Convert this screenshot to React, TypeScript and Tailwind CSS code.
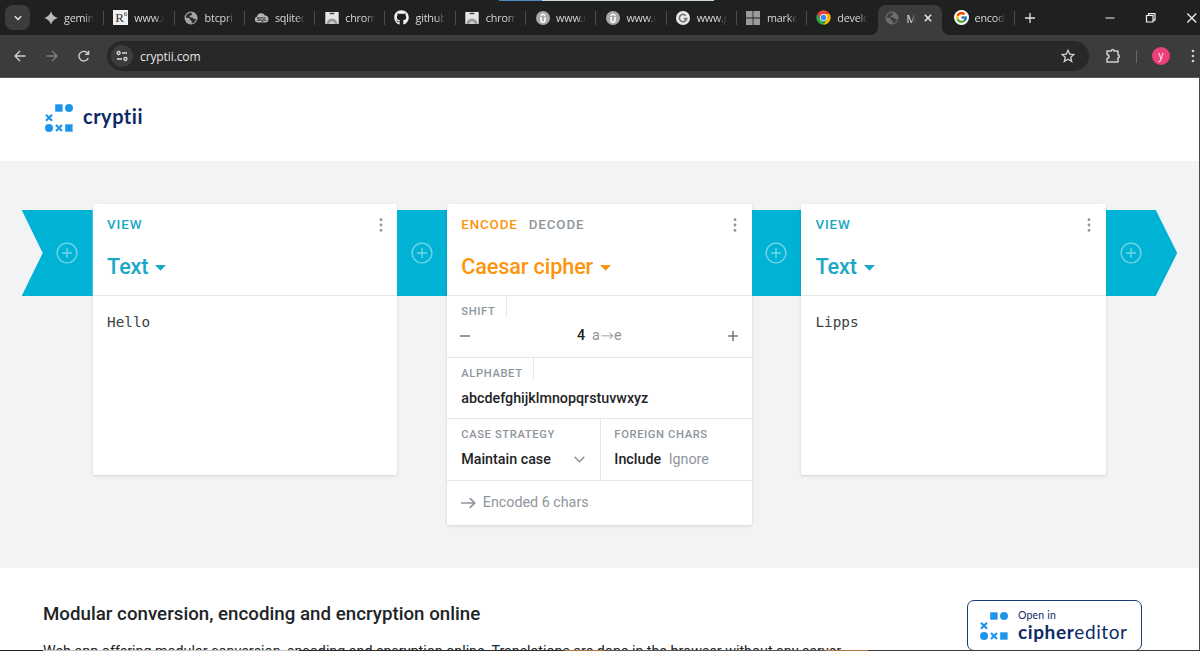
import type { ReactNode } from 'react';
import clsx from 'clsx';
import { FaGithub } from 'react-icons/fa';
import { FcGoogle } from 'react-icons/fc';

function GlobeIcon({ className = 'text-[#a5a5a5]', land = '#2c2e2d' }: { className?: string; land?: string }) {
  return (
    <svg viewBox="0 0 14 14" className={clsx('h-[14px] w-[14px]', className)}>
      <circle cx="7" cy="7" r="6.5" fill="currentColor" />
      <path d="M1.6 6.4 3 3.2 6.6 1.4l1.6 1-.8 1.8-1.8.6.2 1.4 2.6.2 1.2 1.4 2.4.2-.6 2.2-2.4 2-1.4-.2.2-2-1.8-1-.4-1.8z" fill={land} />
    </svg>
  );
}

function GeminiIcon() {
  return (
    <svg viewBox="0 0 14 14" className="h-[14px] w-[14px]">
      <path d="M7 .2C8 3.800 10.200 6 13.800 7 10.200 8 8 10.200 7 13.800 6 10.200 3.800 8 .2 7 3.800 6 6 3.800 7 .2z" fill="#b9b9b9" />
    </svg>
  );
}

function ResearchIcon() {
  return (
    <span className="relative block h-[15px] w-[15px] bg-[#f1f1f1] pl-[2px] font-['Liberation_Serif',serif] text-[13px] leading-[16px] text-[#333]">
      R
      <sup className="absolute right-[1px] top-[1px] text-[7px] leading-[7px]">6</sup>
    </span>
  );
}

function SqlIcon() {
  return (
    <svg viewBox="0 0 15 14" className="h-[14px] w-[15px]">
      <path d="M3.500 11.500a3 3 0 0 1-.4-5.900A4.200 4.200 0 0 1 11 4.600a3.500 3.500 0 0 1 .8 6.900z" fill="#b4b4b4" />
      <text x="2.700" y="9.900" fontSize="5" fontWeight="700" fill="#2a2a2a" fontFamily="Liberation Sans, sans-serif">SQL</text>
    </svg>
  );
}

function WebStoreIcon() {
  return (
    <svg viewBox="0 0 14 14" className="h-[14px] w-[14px]">
      <rect x=".3" y="1" width="13.400" height="12" fill="#e6e6e6" />
      <rect x="4.500" y="1.800" width="5" height="1.500" rx=".7" fill="#444" />
      <path d="M1.500 13a5.500 5.500 0 0 1 11 0z" fill="#9a9a9a" />
      <path d="M4.300 13a2.700 2.700 0 0 1 5.400 0z" fill="#cdcdcd" />
    </svg>
  );
}

function UdemyIcon() {
  return (
    <svg viewBox="0 0 14 14" className="h-[14px] w-[14px]">
      <circle cx="7" cy="7" r="7" fill="#a9a9a9" />
      <path d="M5 6v3.200a2 2 0 0 0 4 0V6M4.600 4.600 7 3.200l2.400 1.400" fill="none" stroke="#fff" strokeWidth="1.500" />
    </svg>
  );
}

function GrammarlyIcon() {
  return (
    <svg viewBox="0 0 14 14" className="h-[14px] w-[14px]">
      <circle cx="7" cy="7" r="7" fill="#ececec" />
      <path d="M9.800 4.600A3.700 3.700 0 1 0 10.700 7.600H7.600" fill="none" stroke="#777" strokeWidth="1.700" />
    </svg>
  );
}

function SquaresIcon() {
  return (
    <svg viewBox="0 0 14 14" className="h-[14px] w-[14px]" fill="#9b9b9b">
      <path d="M0 0h6.600v6.600H0zM7.400 0H14v6.600H7.400zM0 7.400h6.600V14H0zM7.400 7.400H14V14H7.400z" />
    </svg>
  );
}

function ChromeIcon() {
  return (
    <svg viewBox="0 0 48 48" className="h-[15px] w-[15px]">
      <path d="M24 12.500h19.900A23 23 0 0 0 4.100 12.500l10 17.300z" fill="#ea4335" />
      <path d="M33.900 29.800 24 47a23 23 0 0 0 19.900-34.500H24z" fill="#fbbc04" />
      <path d="M14 29.800 4.100 12.500A23 23 0 0 0 24 47l9.900-17.200z" fill="#34a853" />
      <circle cx="24" cy="24" r="11.500" fill="#fff" />
      <circle cx="24" cy="24" r="9" fill="#4285f4" />
    </svg>
  );
}

function GoogleIcon() {
  return (
    <span className="flex h-[15px] w-[15px] items-center justify-center rounded-full bg-white">
      <FcGoogle size={13} />
    </span>
  );
}

const TABS: { title: string; icon: ReactNode }[] = [
  { title: 'gemin', icon: <GeminiIcon /> },
  { title: 'www.r', icon: <ResearchIcon /> },
  { title: 'btcpri', icon: <GlobeIcon /> },
  { title: 'sqlitec', icon: <SqlIcon /> },
  { title: 'chrom', icon: <WebStoreIcon /> },
  { title: 'github', icon: <FaGithub size={15} color="#f4f4f4" /> },
  { title: 'chrom', icon: <WebStoreIcon /> },
  { title: 'www.u', icon: <UdemyIcon /> },
  { title: 'www.u', icon: <UdemyIcon /> },
  { title: 'www.g', icon: <GrammarlyIcon /> },
  { title: 'marke', icon: <SquaresIcon /> },
  { title: 'develo', icon: <ChromeIcon /> },
];

function Tab({ title, icon, last }: { title: string; icon: ReactNode; last?: boolean }) {
  return (
    <div className="flex h-full w-[70.3px] shrink-0 items-center pl-[9px]">
      <span className="flex w-[15px] shrink-0 justify-center">{icon}</span>
      <span className="ml-[6px] mt-px w-[30px] whitespace-nowrap text-[10.800px] leading-4 tracking-[-0.2px] text-[#d8d8d8] [mask-image:linear-gradient(to_right,black_70%,transparent)]">
        {title}
      </span>
      <span className={clsx('ml-auto h-[14px] w-px', last ? 'bg-transparent' : 'bg-[#4a4b4b]')} />
    </div>
  );
}

function TabStrip() {
  return (
    <div className="flex h-[35px] items-center bg-[#1f2120] font-['Open_Sans','Noto_Sans',sans-serif]">
      <button className="ml-[5px] flex h-[25px] w-[25px] shrink-0 items-center justify-center rounded-[8px] bg-[#3c3c3c]">
        <svg viewBox="0 0 10 10" className="h-[10px] w-[10px]" fill="none" stroke="#e8e8e8" strokeWidth="1.500">
          <path d="M1.800 3.300 5 6.500l3.200-3.200" />
        </svg>
      </button>
      <div className="ml-[4px] flex h-full">
        {TABS.map((tab, i) => (
          <Tab key={i} title={tab.title} icon={tab.icon} last={i === TABS.length - 1} />
        ))}
      </div>
      <div className="relative mt-[5px] flex h-[30px] w-[64px] shrink-0 items-center rounded-t-[8px] bg-[#3c3c3c] pb-[4px] pl-[7px]">
        <span className="absolute -left-[8px] bottom-0 h-[8px] w-[8px] bg-[radial-gradient(circle_at_0_0,transparent_8px,#3c3c3c_8px)]" />
        <span className="absolute -right-[8px] bottom-0 h-[8px] w-[8px] bg-[radial-gradient(circle_at_100%_0,transparent_8px,#3c3c3c_8px)]" />
        <GlobeIcon className="text-[#6e6e6e]" land="#3c3c3c" />
        <span className="ml-[8px] mt-px w-[8px] text-[10.800px] leading-4 text-[#e6e6e6] [mask-image:linear-gradient(to_right,black_50%,transparent)]">
          M
        </span>
        <svg viewBox="0 0 8 8" className="ml-[9px] h-[8px] w-[8px]" stroke="#ededed" strokeWidth="1.400">
          <path d="M.8.8l6.400 6.400M7.200.8.8 7.200" />
        </svg>
      </div>
      <div className="ml-[3px] flex h-full">
        <Tab title="encod" icon={<GoogleIcon />} />
      </div>
      <svg viewBox="0 0 10 10" className="ml-[10px] h-[10px] w-[10px] shrink-0" stroke="#e2e2e2" strokeWidth="1.300">
        <path d="M5 0v10M0 5h10" />
      </svg>
      <svg viewBox="0 0 94 12" className="ml-[70px] h-[12px] w-[94px] shrink-0" fill="none" stroke="#f0f0f0" strokeWidth="1.200">
        <path d="M.5 6h9M82.300 1.500l9 9M91.300 1.500l-9 9" />
        <path d="M41.500 3.500h6.500V10h-6.500zM43.500 3.500V1.700h6.500v6.500h-2" />
      </svg>
    </div>
  );
}

function Toolbar() {
  return (
    <div className="flex h-[43px] items-center border-b border-[#5a5a5a] bg-[#3c3c3c] font-['Open_Sans','Noto_Sans',sans-serif]">
      <svg viewBox="0 0 76 12" className="ml-[14px] h-[12px] w-[76px] shrink-0" fill="none" strokeWidth="1.400">
        <path d="M6 1 1 6l5 5M1 6h10.500" stroke="#d0d0d0" />
        <path d="M38 1l5 5-5 5M43 6H32.500" stroke="#7c7c7c" />
        <path d="M74.200 8A4.800 4.800 0 1 1 73 2.600l1.500 1.600M74.600.8v3.600H71" stroke="#d0d0d0" />
      </svg>
      <div className="ml-[17px] flex h-[30px] w-[982px] shrink-0 items-center rounded-full bg-[#282828] pl-[4px] pr-[13px]">
        <span className="flex h-[22px] w-[22px] items-center justify-center rounded-full bg-[#3c3c3c]">
          <svg viewBox="0 0 12 12" className="h-[12px] w-[12px]" fill="none" stroke="#dcdcdc" strokeWidth="1.300">
            <circle cx="2.600" cy="3" r="1.500" />
            <circle cx="9.400" cy="9" r="1.500" />
            <path d="M6 3h5M1 9h5" />
          </svg>
        </span>
        <span className="ml-[7px] mt-px text-[12px] leading-4 tracking-[-0.1px] text-[#e6e6e6]">cryptii.com</span>
        <svg viewBox="0 0 24 24" className="ml-auto h-[16px] w-[16px]" fill="none" stroke="#d0d0d0" strokeWidth="2">
          <path d="M12 3.500l2.600 5.700 6.200.6-4.700 4.100 1.400 6.100-5.500-3.200L6.500 20l1.400-6.100L3.200 9.800l6.200-.6z" />
        </svg>
      </div>
      <svg viewBox="0 0 16 16" className="ml-[16px] h-[16px] w-[16px] shrink-0" fill="none" stroke="#d0d0d0" strokeWidth="1.500">
        <path d="M2 3h4.200c0-1.900 2.800-1.900 2.800 0h4v4c1.900 0 1.900 2.800 0 2.800V14H2v-3.400c2.600-.2 2.600-4 0-4.200z" strokeLinejoin="round" />
      </svg>
      <span className="ml-[15px] h-[13px] w-px bg-[#666]" />
      <span className="ml-[15px] flex h-[18px] w-[18px] shrink-0 items-center justify-center rounded-full bg-[#ec407a] pb-px text-[10px] text-white">
        y
      </span>
      <svg viewBox="0 0 4 14" className="ml-[21px] h-[14px] w-[4px] shrink-0" fill="#d0d0d0">
        <circle cx="2" cy="2" r="1.300" />
        <circle cx="2" cy="7" r="1.300" />
        <circle cx="2" cy="12" r="1.300" />
      </svg>
    </div>
  );
}

function LogoMark({ className }: { className: string }) {
  return (
    <svg viewBox="0 0 28 28" className={className} fill="#1e95ea">
      <rect x="10.200" y=".3" width="7.400" height="7.400" />
      <circle cx="24" cy="4" r="4" />
      <circle cx="4" cy="24" r="4" />
      <rect x="20.200" y="20.300" width="7.400" height="7.400" />
      <path d="M1 10.700l6 6M7 10.700l-6 6M11 21l6 6M17 21l-6 6" stroke="#1e95ea" strokeWidth="2.200" />
    </svg>
  );
}

function Connector({ shape }: { shape?: 'start' | 'end' }) {
  return (
    <div
      className={clsx(
        'mt-[6px] flex h-[86px] shrink-0 items-center bg-[#00b2d4]',
        shape === 'start' && 'w-[71px] justify-end pr-[14.500px] [clip-path:polygon(0_0,100%_0,100%_100%,0_100%,21px_50%)]',
        shape === 'end' && 'w-[71.500px] pl-[14px] [clip-path:polygon(0_0,50px_0,100%_50%,50px_100%,0_100%)]',
        !shape && 'w-[49.500px] justify-center',
      )}
    >
      <svg viewBox="0 0 22 22" className="h-[22px] w-[22px]" fill="none" stroke="#73d5e8" strokeWidth="1.400">
        <circle cx="11" cy="11" r="9.900" />
        <path d="M11 6v10M6 11h10" />
      </svg>
    </div>
  );
}

function BrickHeader({ children, title, color }: { children: ReactNode; title: string; color: string }) {
  return (
    <div className="h-[92px] border-b border-[#e3e6e9] px-[14.400px] pt-[12px]">
      <div className="flex h-[18px] items-center gap-[11px] text-[13.400px] font-medium leading-[18px] tracking-[0.85px]">
        {children}
        <svg viewBox="0 0 4 14" className="ml-auto h-[14px] w-[4px]" fill="#8b9299">
          <circle cx="2" cy="1.700" r="1.400" />
          <circle cx="2" cy="7" r="1.400" />
          <circle cx="2" cy="12.300" r="1.400" />
        </svg>
      </div>
      <div className={clsx('mt-[19px] flex items-center text-[21.600px] font-medium leading-[28px] tracking-[-0.1px]', color)}>
        {title}
        <svg viewBox="0 0 11 6" className="ml-[7px] mt-px h-[6px] w-[11px]" fill="currentColor">
          <path d="M0 0h11L5.500 5.700z" />
        </svg>
      </div>
    </div>
  );
}

function ViewBrick({ content }: { content: string }) {
  return (
    <div className="h-[271px] w-[304.700px] shrink-0 rounded-[2px] bg-white shadow-[0_1px_3px_rgba(0,0,0,0.14)]">
      <BrickHeader title="Text" color="text-[#1ba7c6]">
        <span className="text-[#1ba7c6]">VIEW</span>
      </BrickHeader>
      <p className="px-[14.400px] pt-[16px] font-['DejaVu_Sans_Mono','Liberation_Mono',monospace] text-[14.300px] leading-[20px] text-[#3b3f42]">
        {content}
      </p>
    </div>
  );
}

function FieldLabel({ children, divider }: { children: string; divider?: boolean }) {
  return (
    <div
      className={clsx(
        'flex h-[21px] w-fit items-end text-[11.200px] font-medium leading-[11px] tracking-[0.62px] text-[#8e969d]',
        divider && 'border-r border-[#e3e6e9] pr-[10.500px]',
      )}
    >
      {children}
    </div>
  );
}

function CipherBrick() {
  return (
    <div className="h-[321px] w-[304.700px] shrink-0 rounded-[2px] bg-white text-[14.300px] font-medium text-[#1f2326] shadow-[0_1px_3px_rgba(0,0,0,0.14)]">
      <BrickHeader title="Caesar cipher" color="text-[#fb950d]">
        <span className="text-[#fb950d]">ENCODE</span>
        <span className="text-[#8e969d]">DECODE</span>
      </BrickHeader>
      <div className="h-[61.500px] border-b border-[#e3e6e9] px-[14.400px]">
        <FieldLabel divider>SHIFT</FieldLabel>
        <div className="mt-[9px] flex h-[20px] items-center justify-between">
          <svg viewBox="0 0 10 10" className="-ml-px h-[10px] w-[10px]" stroke="#6f777e" strokeWidth="1.500">
            <path d="M0 5h10" />
          </svg>
          <span className="flex items-center">
            4
            <span className="ml-[7px] flex items-center font-normal text-[#8e969d]">
              a
              <span className="w-[14px] text-center font-['DejaVu_Sans',sans-serif] text-[16px] leading-[16px] [font-weight:200]">→</span>
              e
            </span>
          </span>
          <svg viewBox="0 0 10 10" className="-mr-px h-[10px] w-[10px]" stroke="#6f777e" strokeWidth="1.500">
            <path d="M0 5h10M5 0v10" />
          </svg>
        </div>
      </div>
      <div className="h-[61.500px] border-b border-[#e3e6e9] px-[14.400px]">
        <FieldLabel divider>ALPHABET</FieldLabel>
        <p className="mt-[9px] leading-[20px]">abcdefghijklmnopqrstuvwxyz</p>
      </div>
      <div className="flex h-[61.500px] border-b border-[#e3e6e9]">
        <div className="w-[153.700px] border-r border-[#e3e6e9] px-[14.400px]">
          <FieldLabel>CASE STRATEGY</FieldLabel>
          <div className="mt-[9px] flex items-center justify-between leading-[20px]">
            Maintain case
            <svg viewBox="0 0 11 7" className="mt-px h-[7px] w-[11px]" fill="none" stroke="#8e969d" strokeWidth="1.500">
              <path d="M.7.9l4.800 4.800L10.300.9" />
            </svg>
          </div>
        </div>
        <div className="pl-[13.800px]">
          <FieldLabel>FOREIGN CHARS</FieldLabel>
          <div className="mt-[9px] flex gap-[7.500px] leading-[20px]">
            Include
            <span className="font-normal text-[#8e969d]">Ignore</span>
          </div>
        </div>
      </div>
      <div className="flex h-[44px] items-center gap-[6.500px] pl-[14.400px] font-normal text-[#8e969d]">
        <svg viewBox="0 0 15 12" className="h-[12px] w-[15px]" fill="none" stroke="#8e969d" strokeWidth="1.700">
          <path d="M0 6h13.500M8.800 1.200l4.900 4.800-4.900 4.800" />
        </svg>
        Encoded 6 chars
      </div>
    </div>
  );
}

export default function App() {
  return (
    <div className="relative flex h-[651px] w-[1200px] flex-col overflow-hidden bg-white font-['Roboto',sans-serif]">
      <TabStrip />
      <Toolbar />

      <div className="flex h-[573px] flex-col border-r border-[#4a4a4a]">
        <header className="flex h-[83px] shrink-0 items-center pb-[4px] pl-[45px]">
          <LogoMark className="h-[28px] w-[28px]" />
          <span className="-mt-[4px] ml-[10px] font-['Lato',sans-serif] text-[20px] font-bold leading-[24px] tracking-[0.5px] text-[#0c2a66]">cryptii</span>
        </header>

        <main className="flex h-[407px] shrink-0 items-start bg-[#f1f3f5] pl-[21.700px] pt-[43px]">
          <Connector shape="start" />
          <ViewBrick content="Hello" />
          <Connector />
          <CipherBrick />
          <Connector />
          <ViewBrick content="Lipps" />
          <Connector shape="end" />
        </main>

        <section className="flex min-h-0 flex-1 items-start justify-between overflow-hidden pl-[43px] pr-[57px]">
          <div className="pt-[34px] text-[#202427]">
            <h1 className="text-[18.700px] font-medium leading-[25px] tracking-[0.02px]">Modular conversion, encoding and encryption online</h1>
            <p className="mt-[14px] whitespace-nowrap text-[14.250px] leading-[20px]">
              Web app offering modular conversion, encoding and encryption online. Translations are done in the browser without any server
            </p>
          </div>
          <div className="mt-[32px] flex h-[51px] w-[175px] items-center rounded-[7px] border border-[#1c3b73] pl-[12px] text-[#0c2a66]">
            <LogoMark className="h-[28px] w-[28px]" />
            <div className="-mt-px ml-[10px] font-['Lato',sans-serif]">
              <div className="text-[10.500px] leading-[13px] tracking-[0.2px]">Open in</div>
              <div className="text-[19px] leading-[20px] tracking-[0.6px]">
                <b>cipher</b>editor
              </div>
            </div>
          </div>
        </section>
      </div>

      {/* slivers of the neighbouring windows along the screen edge */}
      <div className="absolute left-[499px] top-0 flex h-px w-[215px]">
        <span className="w-[43px] bg-[#4a86c0]" />
        <span className="flex-1 bg-[#d5dad8]" />
      </div>
      <div className="absolute bottom-0 left-0 flex h-px w-full">
        <span className="w-[43px] bg-[#222]" />
        <span className="w-[256px] bg-[#c4c4c4]" />
        <span className="w-[265px] bg-[#2d2d2d]" />
        <span className="w-[40px] bg-[#b5753a]" />
        <span className="w-[221px] bg-[#55585c]" />
        <span className="w-[43px] bg-[#b5753a]" />
        <span className="flex-1 bg-[#3a3c3e]" />
      </div>
    </div>
  );
}
